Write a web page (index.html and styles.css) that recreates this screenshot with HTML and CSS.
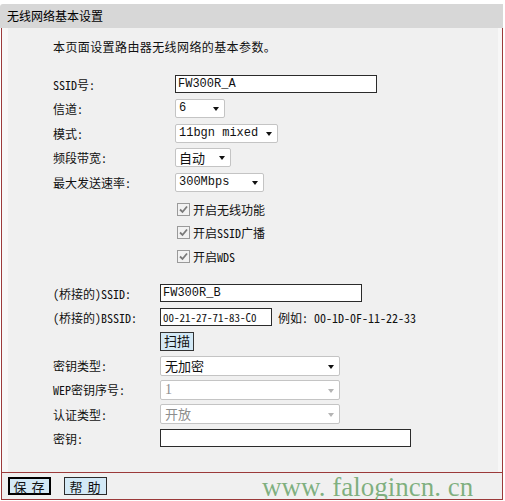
FILE: index.html
```html
<!DOCTYPE html>
<html lang="zh-CN">
<head>
  <meta charset="UTF-8">
  <title>无线网络基本设置</title>
  <link rel="stylesheet" href="styles.css">
</head>
<body>
  <div class="frame">
    <div class="title">无线网络基本设置</div>
    <div class="body">
      <div class="panel">
        <p class="intro">本页面设置路由器无线网络的基本参数。</p>

        <div class="form basic">
          <div class="label">SSID号:</div>
          <div><input class="text ssid" type="text" value="FW300R_A"></div>

          <div class="label">信道:</div>
          <div><span class="select w-channel"><span class="value">6</span></span></div>

          <div class="label">模式:</div>
          <div><span class="select w-mode"><span class="value">11bgn mixed</span></span></div>

          <div class="label">频段带宽:</div>
          <div><span class="select w-band"><span class="value cjk">自动</span></span></div>

          <div class="label">最大发送速率:</div>
          <div><span class="select w-rate"><span class="value">300Mbps</span></span></div>
        </div>

        <div class="checks">
          <label class="check"><span class="box"><svg viewBox="0 0 11 11" width="11" height="11"><polyline points="2,5.5 4.5,8 9,2.5" fill="none" stroke="#7a7a7a" stroke-width="1.8"/></svg></span>开启无线功能</label>
          <label class="check"><span class="box"><svg viewBox="0 0 11 11" width="11" height="11"><polyline points="2,5.5 4.5,8 9,2.5" fill="none" stroke="#7a7a7a" stroke-width="1.8"/></svg></span>开启SSID广播</label>
          <label class="check"><span class="box"><svg viewBox="0 0 11 11" width="11" height="11"><polyline points="2,5.5 4.5,8 9,2.5" fill="none" stroke="#7a7a7a" stroke-width="1.8"/></svg></span>开启WDS</label>
        </div>

        <div class="form bridge">
          <div class="label">(桥接的)SSID:</div>
          <div><input class="text ssid" type="text" value="FW300R_B"></div>

          <div class="label">(桥接的)BSSID:</div>
          <div class="inline">
            <input class="text bssid" type="text" value="00-21-27-71-83-C0">
            <span class="hint">例如: 00-1D-0F-11-22-33</span>
          </div>

          <div class="label"></div>
          <div><button class="btn scan" type="button">扫描</button></div>

          <div class="label">密钥类型:</div>
          <div><span class="select wide"><span class="value cjk">无加密</span></span></div>

          <div class="label">WEP密钥序号:</div>
          <div><span class="select wide disabled"><span class="value serif">1</span></span></div>

          <div class="label">认证类型:</div>
          <div><span class="select wide disabled"><span class="value cjk">开放</span></span></div>

          <div class="label">密钥:</div>
          <div><input class="text key" type="text" value=""></div>
        </div>
      </div>
    </div>
    <div class="footer">
      <button class="btn action default" type="button">保 存</button>
      <button class="btn action" type="button">帮 助</button>
    </div>
    <div class="watermark">www. falogincn. cn</div>
  </div>
</body>
</html>
```

FILE: styles.css
```css
body {
  margin: 0;
  background: #ffffff;
  color: #111111;
  font-family: "Noto Sans Mono CJK SC", "Liberation Mono", "Noto Sans CJK SC", monospace;
  font-size: 12px;
}
.frame {
  position: relative;
  width: 503px;
  margin-top: 4px;
}
.title {
  height: 24px;
  line-height: 24px;
  padding-left: 7px;
  background: #d7d7d7;
  border-top-left-radius: 3px;
  font-family: "Noto Sans CJK SC", sans-serif;
  font-size: 12px;
  color: #000;
}
.body {
  box-sizing: border-box;
  width: 502px;
  height: 444px;
  margin-left: 1px;
  padding: 0 4px 0 6px;
  background: #f7f7f7;
  border-left: 1px solid #9b3a3a;
  border-right: 1px solid #9b3a3a;
}
.panel {
  height: 100%;
  box-sizing: border-box;
  padding: 9px 0 0 45px;
  background: #f0f0f0;
}
.intro {
  margin: 0;
  height: 20px;
  line-height: 20px;
  font-family: "Noto Sans CJK SC", sans-serif;
  font-size: 12px;
  letter-spacing: 0.4px;
}
.form {
  display: grid;
  align-items: center;
}
.form.basic {
  margin-top: 15px;
  grid-template-columns: 122px 1fr;
  grid-auto-rows: 24.5px;
}
.form.bridge {
  margin-top: 13px;
  grid-template-columns: 107px 1fr;
  grid-auto-rows: 24.2px;
}
.label {
  white-space: nowrap;
}
.inline {
  display: flex;
  align-items: center;
  gap: 6px;
}
.text {
  box-sizing: border-box;
  height: 18px;
  margin: 0;
  padding: 0 2px;
  border: 1px solid #2b2b2b;
  background: #ffffff;
  color: #111;
  font-family: "Liberation Mono", monospace;
  font-size: 12px;
  display: block;
}
.text.ssid {
  width: 202px;
}
.text.bssid {
  width: 112px;
  height: 18px;
  font-family: "Noto Sans Mono CJK SC", "Liberation Mono", monospace;
  font-size: 11px;
}
.text.key {
  width: 251px;
}
.hint {
  white-space: nowrap;
}
.select {
  position: relative;
  box-sizing: border-box;
  display: block;
  height: 19px;
  line-height: 17px;
  padding-left: 3px;
  border: 1px solid #c4c4c4;
  border-radius: 2px;
  background: #ffffff;
  font-family: "Liberation Mono", "Noto Sans CJK SC", monospace;
  font-size: 12px;
}
.select::after {
  content: "";
  position: absolute;
  right: 5px;
  top: 7px;
  border-left: 3.5px solid transparent;
  border-right: 3.5px solid transparent;
  border-top: 4px solid #111;
}
.select .cjk {
  font-family: "Noto Sans CJK SC", sans-serif;
  font-size: 13px;
}
.select .serif {
  font-family: "Liberation Serif", serif;
  font-size: 14px;
}
.w-channel { width: 50px; }
.w-mode { width: 103px; }
.w-band { width: 56px; }
.w-rate { width: 89px; }
.select.wide {
  width: 180px;
  height: 20px;
  line-height: 18px;
  padding-left: 4px;
}
.select.wide::after {
  right: 5px;
  top: 8px;
}
.select.disabled {
  color: #8d8d8d;
}
.select.disabled::after {
  border-top-color: #b4b4b4;
}
.checks {
  margin-top: 3px;
  padding-left: 124px;
}
.check {
  display: flex;
  align-items: center;
  gap: 3px;
  height: 23.5px;
  font-family: "Noto Sans Mono CJK SC", "Liberation Mono", "Noto Sans CJK SC", monospace;
}
.box {
  box-sizing: border-box;
  display: flex;
  align-items: center;
  justify-content: center;
  width: 13px;
  height: 13px;
  border: 1px solid #9a9a9a;
  background: #f2f2f2;
}
.btn {
  box-sizing: border-box;
  margin: 0;
  padding: 0;
  background: #d3e9f6;
  color: #111;
  font-family: "Noto Sans CJK SC", sans-serif;
  cursor: default;
}
.btn.scan {
  display: block;
  width: 34px;
  height: 19px;
  line-height: 16px;
  border: 1px solid #333;
  font-size: 13px;
}
.footer {
  box-sizing: border-box;
  width: 502px;
  height: 28px;
  margin-left: 1px;
  padding: 4px 0 0 6px;
  display: flex;
  align-items: flex-start;
  gap: 13px;
  background: #f0f0f0;
  border: 1px solid #9b3a3a;
}
.btn.action {
  width: 43px;
  height: 18px;
  line-height: 15px;
  border: 1px solid #2b2b2b;
  font-size: 13px;
  letter-spacing: 1px;
}
.btn.action.default {
  border: 2px solid #000;
  line-height: 13px;
}
.watermark {
  position: absolute;
  left: 262px;
  top: 470px;
  line-height: 1;
  font-family: "Liberation Serif", serif;
  font-size: 27px;
  color: rgba(96, 158, 96, 0.78);
  white-space: nowrap;
  pointer-events: none;
}
```
